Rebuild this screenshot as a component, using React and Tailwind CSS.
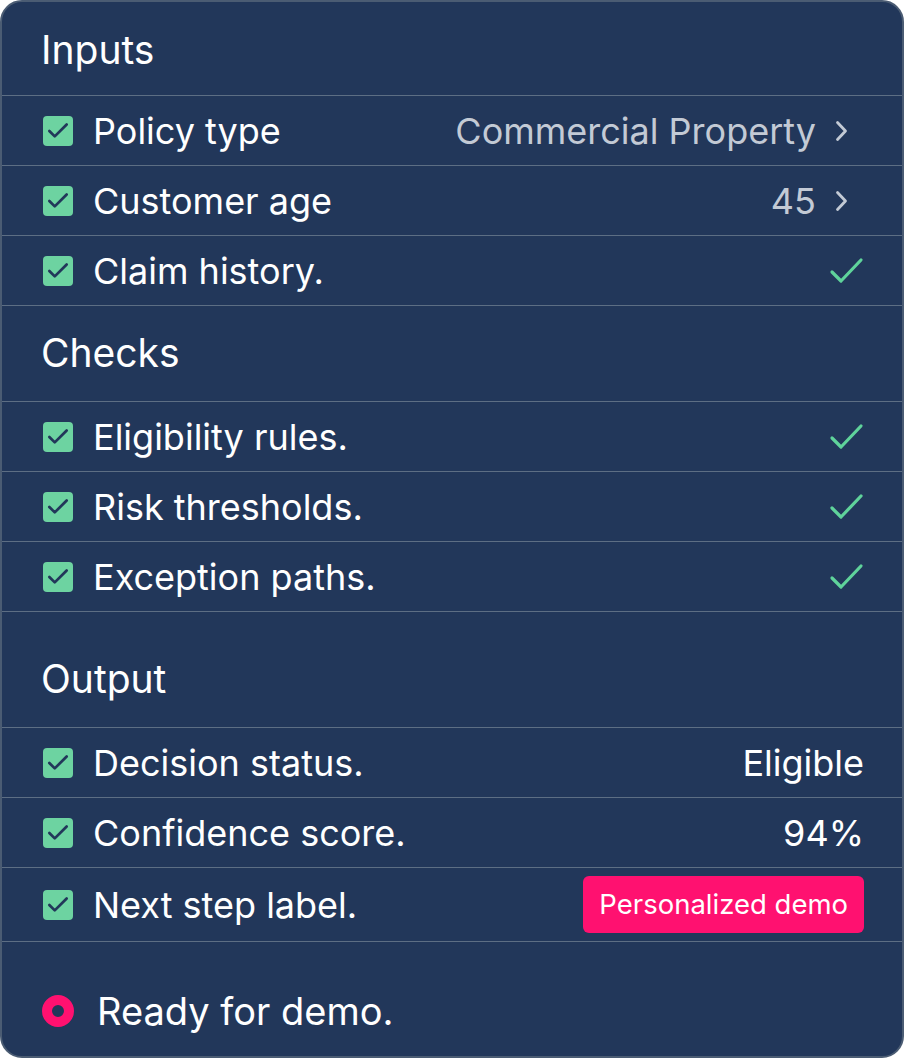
import { Check } from 'lucide-react';

const INPUTS = [
  { label: 'Policy type', value: 'Commercial Property', kind: 'chevron' },
  { label: 'Customer age', value: '45', kind: 'chevron' },
  { label: 'Claim history.', kind: 'check' },
];

const CHECKS = [
  { label: 'Eligibility rules.', kind: 'check' },
  { label: 'Risk thresholds.', kind: 'check' },
  { label: 'Exception paths.', kind: 'check' },
];

function Box() {
  return (
    <span className="w-[30px] h-[30px] rounded-[4px] bg-[#6dd3a1] flex items-center justify-center shrink-0">
      <Check className="w-[26px] h-[26px] text-[#22375a]" strokeWidth={2.5} />
    </span>
  );
}

function Chevron() {
  return (
    <svg width="16" height="24" viewBox="0 0 16 24" className="ml-[18px] mr-[14px]" fill="none">
      <path d="M3.5 3.5 L11.5 12 L3.5 20.5" stroke="#c3cad5" strokeWidth="2.8" strokeLinecap="round" strokeLinejoin="round" />
    </svg>
  );
}

function GreenCheck() {
  return (
    <svg width="36" height="28" viewBox="0 0 36 28" fill="none" className="mr-[-1px]">
      <path d="M3 15 L12 24 L32 3" stroke="#5fd39b" strokeWidth="3.2" strokeLinecap="round" strokeLinejoin="round" />
    </svg>
  );
}

function Row({ label, value, kind, tall, children }) {
  return (
    <div className={`flex items-center border-t-[1.5px] border-[#5d6e84] pl-[41px] pr-[38px] ${tall ? 'h-[74px]' : 'h-[70px]'}`}>
      <Box />
      <span className="ml-[20px] text-[36px] text-white">{label}</span>
      <div className="ml-auto flex items-center">
        {kind === 'chevron' && (
          <>
            <span className="text-[36px] text-[#c3cad5]">{value}</span>
            <Chevron />
          </>
        )}
        {kind === 'check' && <GreenCheck />}
        {kind === 'text' && <span className="text-[36px] text-white">{value}</span>}
        {children}
      </div>
    </div>
  );
}

function SectionTitle({ children, className }) {
  return (
    <div className={`flex items-end px-[39px] border-t-[1.5px] border-[#5d6e84] ${className}`}>
      <h2 className="text-[39px] text-white leading-none">{children}</h2>
    </div>
  );
}

export default function App() {
  return (
    <div className="w-[904px] h-[1058px] bg-white" style={{ fontFamily: 'Inter, "Liberation Sans", sans-serif' }}>
      <div className="h-full rounded-[22px] border-2 border-[#4b5c73] bg-[#22375a] overflow-hidden flex flex-col">
        <div className="h-[93px] px-[39px] pt-[28px]">
          <h2 className="text-[39px] text-white leading-none">Inputs</h2>
        </div>
        {INPUTS.map(r => <Row key={r.label} {...r} />)}

        <SectionTitle className="h-[96px] pb-[29px]">Checks</SectionTitle>
        {CHECKS.map(r => <Row key={r.label} {...r} />)}

        <SectionTitle className="h-[116px] pb-[29px]">Output</SectionTitle>
        <Row label="Decision status." value="Eligible" kind="text" />
        <Row label="Confidence score." value="94%" kind="text" />
        <Row label="Next step label." tall>
          <span className="h-[57px] px-[16px] rounded-[6px] bg-[#ff1170] text-white text-[27.5px] flex items-center">
            Personalized demo
          </span>
        </Row>

        <div className="flex-1 border-t-[1.5px] border-[#5d6e84] flex items-center pl-[40px] pt-[24px]">
          <span className="w-[32px] h-[32px] rounded-full border-[10px] border-[#ff1170] shrink-0" />
          <span className="ml-[23px] text-[38px] text-white">Ready for demo.</span>
        </div>
      </div>
    </div>
  );
}
